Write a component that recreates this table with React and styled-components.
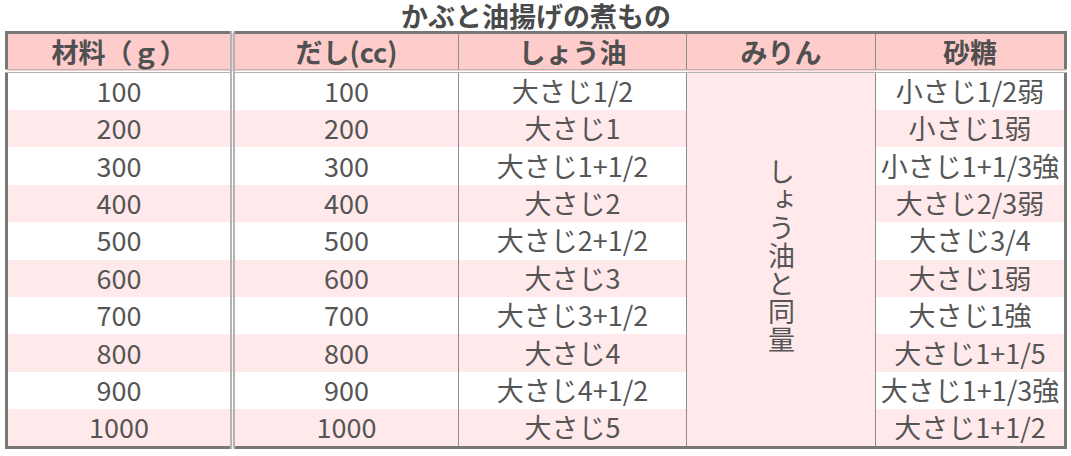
import React from "react";
import styled, { createGlobalStyle } from "styled-components";

const GlobalStyle = createGlobalStyle`
  html, body { margin: 0; padding: 0; background: #fff; }
  body { font-family: "Liberation Sans Narrow", "Noto Sans CJK JP", sans-serif; color: #555; }
`;

const Page = styled.div`
  padding: 0 4px 0 5px;
`;

const Table = styled.table`
  width: 1062px;
  border-collapse: collapse;
  table-layout: fixed;
  border: 3px solid #777;
`;

const Caption = styled.caption`
  height: 31px;
  font-size: 27px;
  font-weight: bold;
  line-height: 31px;
  color: #4a4a4a;
  font-family: "Noto Sans CJK JP", sans-serif;
  overflow: hidden;
`;

const Col = styled.col`
  width: ${(p) => p.$w}px;
`;

const Head = styled.th`
  height: 35px;
  padding: 0;
  background: #ffcccc;
  font-size: 27px;
  font-weight: bold;
  line-height: 33px;
  color: #505050;
  border-bottom: 4px double #b4b4b4;
  border-right: ${(p) => (p.$double ? "5px double #b4b4b4" : "1px solid #8c8c8c")};
`;

const Row = styled.tr`
  height: 37.4px;
  background: ${(p) => (p.$even ? "#ffe9ea" : "#fff")};
`;

const Cell = styled.td`
  padding: 0 0 2px;
  text-align: center;
  font-size: 27px;
  line-height: 35px;
  white-space: nowrap;
  border-right: ${(p) => (p.$double ? "5px double #b4b4b4" : "1px solid #8c8c8c")};
`;

const MirinCell = styled(Cell)`
  background: #ffe9ea;
  vertical-align: middle;
`;

const Vertical = styled.span`
  display: inline-block;
  writing-mode: vertical-rl;
  font-family: "Noto Sans CJK JP", sans-serif;
  font-size: 27px;
  line-height: 30px;
  letter-spacing: 1px;
`;

const rows = [
  ["100", "100", "大さじ1/2", "小さじ1/2弱"],
  ["200", "200", "大さじ1", "小さじ1弱"],
  ["300", "300", "大さじ1+1/2", "小さじ1+1/3強"],
  ["400", "400", "大さじ2", "大さじ2/3弱"],
  ["500", "500", "大さじ2+1/2", "大さじ3/4"],
  ["600", "600", "大さじ3", "大さじ1弱"],
  ["700", "700", "大さじ3+1/2", "大さじ1強"],
  ["800", "800", "大さじ4", "大さじ1+1/5"],
  ["900", "900", "大さじ4+1/2", "大さじ1+1/3強"],
  ["1000", "1000", "大さじ5", "大さじ1+1/2"],
];

export default function App() {
  return (
    <Page>
      <GlobalStyle />
      <Table>
        <Caption>かぶと油揚げの煮もの</Caption>
        <colgroup>
          <Col $w={226} />
          <Col $w={226} />
          <Col $w={228} />
          <Col $w={189} />
          <Col $w={190} />
        </colgroup>
        <thead>
          <tr>
            <Head $double>材料（ｇ）</Head>
            <Head>だし(cc)</Head>
            <Head>しょう油</Head>
            <Head>みりん</Head>
            <Head>砂糖</Head>
          </tr>
        </thead>
        <tbody>
          {rows.map((r, i) => (
            <Row key={r[0]} $even={i % 2 === 1}>
              <Cell $double>{r[0]}</Cell>
              <Cell>{r[1]}</Cell>
              <Cell>{r[2]}</Cell>
              {i === 0 && (
                <MirinCell rowSpan={10}>
                  <Vertical>しょう油と同量</Vertical>
                </MirinCell>
              )}
              <Cell>{r[3]}</Cell>
            </Row>
          ))}
        </tbody>
      </Table>
    </Page>
  );
}
